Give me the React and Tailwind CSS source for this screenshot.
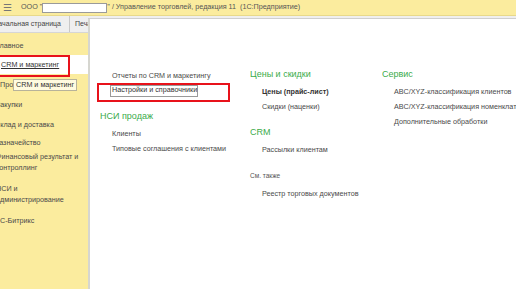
import React from "react";

const font = { fontFamily: '"Liberation Sans", Arial, sans-serif' };

const Item = ({ children, bold }) => (
  <div className={`pl-3 h-[15px] leading-[15px] text-[7.2px] whitespace-nowrap ${bold ? "font-bold text-[#333]" : "text-[#4a4a4a]"}`}>
    {children}
  </div>
);

const Header = ({ children }) => (
  <div className="text-[9px] leading-[12px] text-[#3bab4a] whitespace-nowrap mb-[4px]">{children}</div>
);

const Side = ({ children, cls }) => (
  <div className={`flex items-center whitespace-nowrap ${cls}`}>{children}</div>
);

export default function App() {
  return (
    <div className="w-[516px] h-[289px] overflow-hidden bg-white flex flex-col relative" style={font}>
      {/* top bar */}
      <div className="h-[16px] bg-[#fbec9e] flex items-center text-[7.2px] text-[#555] whitespace-nowrap border-b border-[#e8d98a]">
        <span className="ml-[3px] w-[16px] text-[10px] leading-none text-[#777]">☰</span>
        <span className="ml-[2px]">ООО "</span>
        <span className="inline-block w-[65px] h-[10px] bg-white border border-[#9a9a9a]"></span>
        <span>" / Управление торговлей, редакция 11&nbsp;&nbsp;(1С:Предприятие)</span>
      </div>

      <div className="flex flex-1 min-h-0">
        {/* left column */}
        <div className="w-[88px] flex flex-col shrink-0">
          <div className="h-[17px] bg-[#efefef] border-b border-[#d6d6d6] flex items-stretch overflow-hidden whitespace-nowrap text-[7px] text-[#444]">
            <div className="w-[69px] flex items-center justify-end overflow-hidden pr-[8px]">
              <span>Начальная страница</span>
            </div>
            <div className="border-l border-[#c8c8c8]"></div>
            <div className="flex-1 flex items-center overflow-hidden pl-[5px]">
              <span>Печать</span>
            </div>
          </div>
          <div className="flex-1 bg-[#fbec9e] pt-[2px] text-[7.2px] text-[#4a4a4a] leading-[11px] overflow-hidden">
            <Side cls="h-[20px] -ml-[4px]">Главное</Side>
            <Side cls="h-[19px] bg-white pl-[1px] underline text-[#333]">CRM и маркетинг</Side>
            <Side cls="h-[20px]">Продажи</Side>
            <Side cls="h-[20px] -ml-[4px]">Закупки</Side>
            <Side cls="h-[20px] -ml-[5px]">Склад и доставка</Side>
            <Side cls="h-[16px] -ml-[5px]">Казначейство</Side>
            <div className="mt-[1px] -ml-[4px] whitespace-nowrap">
              <div>Финансовый результат и</div>
              <div>контроллинг</div>
            </div>
            <div className="mt-[10px] -ml-[4px] whitespace-nowrap">
              <div>НСИ и</div>
              <div>администрирование</div>
            </div>
            <div className="mt-[10px] -ml-[4px] whitespace-nowrap">1С-Битрикс</div>
          </div>
        </div>

        {/* right column */}
        <div className="flex-1 flex flex-col min-w-0">
          <div className="h-[3px] bg-[#efefef] border-b border-[#cfcfcf]"></div>
          <div className="flex-1 bg-white border-l-[2px] border-[#d6d6d0] flex pt-[49px] pl-[1px]">
            <div className="w-[159px] flex flex-col pl-[9px]">
              <div className="pl-3">
                <div className="h-[15px] leading-[15px] text-[7.2px] text-[#4a4a4a] whitespace-nowrap">Отчеты по CRM и маркетингу</div>
                <div className="h-[15px] flex items-center">
                  <span className="w-[88px] h-[12px] flex items-center text-[7.2px] text-[#333] border border-[#9a9a9a] pl-[1px] -ml-[2px] whitespace-nowrap">Настройки и справочники</span>
                </div>
              </div>
              <div className="mt-[12px]">
                <Header>НСИ продаж</Header>
                <Item>Клиенты</Item>
                <Item>Типовые соглашения с клиентами</Item>
              </div>
            </div>
            <div className="w-[132px] flex flex-col">
              <Header>Цены и скидки</Header>
              <Item bold>Цены (прайс-лист)</Item>
              <Item>Скидки (наценки)</Item>
              <div className="mt-[12px]">
                <Header>CRM</Header>
                <Item>Рассылки клиентам</Item>
              </div>
              <div className="mt-[13px] text-[6.5px] leading-[12px] text-[#555] whitespace-nowrap">См. также</div>
              <div className="mt-[4px]">
                <Item>Реестр торговых документов</Item>
              </div>
            </div>
            <div className="flex-1 flex flex-col overflow-hidden">
              <Header>Сервис</Header>
              <Item>ABC/XYZ-классификация клиентов</Item>
              <Item>ABC/XYZ-классификация номенклатуры</Item>
              <Item>Дополнительные обработки</Item>
            </div>
          </div>
        </div>
      </div>

      {/* tooltip */}
      <div className="absolute left-[13px] top-[79px] h-[12px] px-[2px] bg-[#fffbe0] border border-[#b8b39a] text-[7.2px] leading-[10px] text-[#333] whitespace-nowrap">
        CRM и маркетинг
      </div>

      {/* red annotation boxes */}
      <div className="absolute left-[-2px] top-[55px] w-[72px] h-[22px] border-2 border-[#e8121b]"></div>
      <div className="absolute left-[97px] top-[83px] w-[133px] h-[19px] border-2 border-[#e8121b]"></div>
    </div>
  );
}
